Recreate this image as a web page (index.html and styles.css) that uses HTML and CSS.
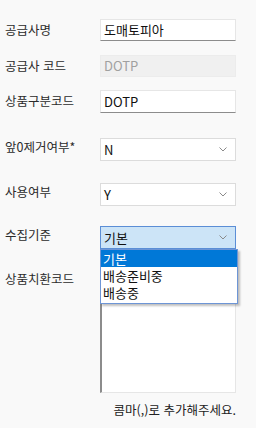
FILE: index.html
```html
<!DOCTYPE html>
<html lang="ko">
<head>
    <meta charset="UTF-8">
    <meta name="viewport" content="width=device-width, initial-scale=1.0">
    <title>공급사 설정</title>
    <link rel="stylesheet" href="styles.css">
</head>
<body>
    <div class="form">
        <div class="row row-1">
            <label class="label">공급사명</label>
            <div class="field text-input">도매토피아</div>
        </div>
        <div class="row row-2">
            <label class="label">공급사 코드</label>
            <div class="field text-input disabled">DOTP</div>
        </div>
        <div class="row row-3">
            <label class="label">상품구분코드</label>
            <div class="field text-input">DOTP</div>
        </div>
        <div class="row row-4">
            <label class="label label-select">앞0제거여부*</label>
            <div class="field select">
                <span>N</span>
                <svg class="chevron" width="8" height="5" viewBox="0 0 8 5"><path d="M0.5 0.5 L4 4 L7.5 0.5" fill="none" stroke="#8a8a8a" stroke-width="1"/></svg>
            </div>
        </div>
        <div class="row row-5">
            <label class="label label-select">사용여부</label>
            <div class="field select">
                <span>Y</span>
                <svg class="chevron" width="8" height="5" viewBox="0 0 8 5"><path d="M0.5 0.5 L4 4 L7.5 0.5" fill="none" stroke="#8a8a8a" stroke-width="1"/></svg>
            </div>
        </div>
        <div class="row row-6">
            <label class="label label-select">수집기준</label>
            <div class="field select open">
                <span>기본</span>
                <svg class="chevron" width="8" height="5" viewBox="0 0 8 5"><path d="M0.5 0.5 L4 4 L7.5 0.5" fill="none" stroke="#8a8a8a" stroke-width="1"/></svg>
                <ul class="dropdown">
                    <li class="active">기본</li>
                    <li>배송준비중</li>
                    <li>배송중</li>
                </ul>
            </div>
        </div>
        <div class="row row-7">
            <label class="label label-area">상품치환코드</label>
            <div class="field textarea"></div>
        </div>
        <p class="help">콤마(,)로 추가해주세요.</p>
    </div>
</body>
</html>
```

FILE: styles.css
```css
body {
    margin: 0;
    background-color: #f9f9f9;
    font-family: "Noto Sans CJK KR", "Noto Sans", sans-serif;
    color: #222;
}
.form {
    padding: 19px 0 0 5px;
}
.row {
    display: flex;
    align-items: flex-start;
}
.row-2 { margin-top: 14px; }
.row-3 { margin-top: 13px; }
.row-4 { margin-top: 25px; }
.row-5 { margin-top: 22px; }
.row-6 { margin-top: 20px; }
.row-7 { margin-top: 21px; }
.label {
    width: 95px;
    font-size: 12.5px;
    line-height: 22px;
    color: #2b2b2b;
}
.label-select {
    line-height: 17px;
}
.label-area {
    line-height: 18px;
}
.field {
    position: relative;
    box-sizing: border-box;
    width: 136px;
    height: 22px;
    padding: 0 3px;
    font-size: 13px;
    line-height: 20px;
    color: #111;
}
.text-input {
    background: white;
    border: 1px solid #e6e6e6;
    border-bottom-color: #8c8c8c;
}
.text-input.disabled {
    background: #f0f0f0;
    border-color: #ececec;
    color: #a0a0a0;
}
.row-3 .text-input {
    height: 23px;
    line-height: 21px;
}
.select {
    height: 23px;
    line-height: 22px;
    background: white;
    border: 1px solid #dcdcdc;
    display: flex;
    justify-content: space-between;
    align-items: center;
    padding-right: 8px;
}
.chevron {
    display: block;
}
.select.open {
    background: #cce4f7;
    border-color: #5b8ed6;
}
.dropdown {
    position: absolute;
    top: 22px;
    left: -1px;
    width: 138px;
    box-sizing: border-box;
    margin: 0;
    padding: 0 0 2px;
    list-style: none;
    background: white;
    border: 1px solid #6d95d6;
    box-shadow: 2px 2px 2px rgba(0, 0, 0, 0.25);
    z-index: 2;
}
.dropdown li {
    height: 17px;
    line-height: 17px;
    padding-left: 2px;
    font-size: 13px;
    color: #111;
}
.dropdown li.active {
    background: #0078d7;
    color: white;
}
.textarea {
    height: 123px;
    background: white;
    border: 1px solid #e6e6e6;
    border-left: 2px solid #8c8c8c;
}
.help {
    margin: 8px 0 0;
    width: 231px;
    text-align: right;
    font-size: 12.5px;
    line-height: 18px;
    color: #222;
}
```
